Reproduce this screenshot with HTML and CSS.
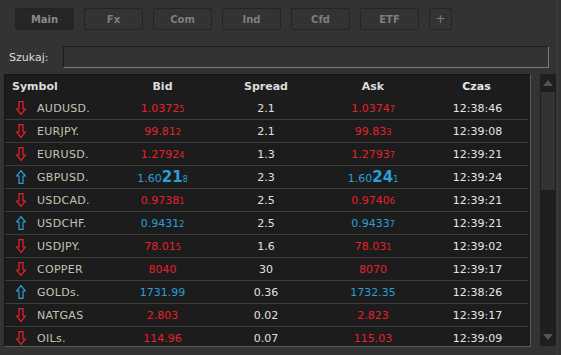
FILE: index.html
```html
<!DOCTYPE html>
<html>
<head>
<meta charset="utf-8">
<link rel="stylesheet" href="styles.css">
</head>
<body>
<div class="app">
  <div class="tabs">
    <div class="tab active">Main</div>
    <div class="tab">Fx</div>
    <div class="tab">Com</div>
    <div class="tab">Ind</div>
    <div class="tab">Cfd</div>
    <div class="tab">ETF</div>
    <div class="tab plus">+</div>
  </div>
  <div class="search">
    <label class="search-label">Szukaj:</label>
    <div class="search-input"></div>
  </div>
  <div class="main">
    <div class="panel">
      <div class="row head">
        <div class="c sym">Symbol</div>
        <div class="c">Bid</div>
        <div class="c">Spread</div>
        <div class="c">Ask</div>
        <div class="c time">Czas</div>
      </div>

      <div class="row">
        <div class="c sym"><svg class="arr down" viewBox="0 0 10 14"><polygon points="3,0.6 7,0.6 7,8 9.4,8 5,13.4 0.6,8 3,8"/></svg><span class="name">AUDUSD.</span></div>
        <div class="c red">1.0372<small>5</small></div>
        <div class="c sp">2.1</div>
        <div class="c red">1.0374<small>7</small></div>
        <div class="c time">12:38:46</div>
      </div>
      <div class="row">
        <div class="c sym"><svg class="arr down" viewBox="0 0 10 14"><polygon points="3,0.6 7,0.6 7,8 9.4,8 5,13.4 0.6,8 3,8"/></svg><span class="name">EURJPY.</span></div>
        <div class="c red">99.81<small>2</small></div>
        <div class="c sp">2.1</div>
        <div class="c red">99.83<small>3</small></div>
        <div class="c time">12:39:08</div>
      </div>
      <div class="row">
        <div class="c sym"><svg class="arr down" viewBox="0 0 10 14"><polygon points="3,0.6 7,0.6 7,8 9.4,8 5,13.4 0.6,8 3,8"/></svg><span class="name">EURUSD.</span></div>
        <div class="c red">1.2792<small>4</small></div>
        <div class="c sp">1.3</div>
        <div class="c red">1.2793<small>7</small></div>
        <div class="c time">12:39:21</div>
      </div>
      <div class="row">
        <div class="c sym"><svg class="arr up" viewBox="0 0 10 14"><polygon points="3,13.4 7,13.4 7,6 9.4,6 5,0.6 0.6,6 3,6"/></svg><span class="name">GBPUSD.</span></div>
        <div class="c blue">1.60<b>21</b><small>8</small></div>
        <div class="c sp">2.3</div>
        <div class="c blue">1.60<b>24</b><small>1</small></div>
        <div class="c time">12:39:24</div>
      </div>
      <div class="row">
        <div class="c sym"><svg class="arr down" viewBox="0 0 10 14"><polygon points="3,0.6 7,0.6 7,8 9.4,8 5,13.4 0.6,8 3,8"/></svg><span class="name">USDCAD.</span></div>
        <div class="c red">0.9738<small>1</small></div>
        <div class="c sp">2.5</div>
        <div class="c red">0.9740<small>6</small></div>
        <div class="c time">12:39:21</div>
      </div>
      <div class="row">
        <div class="c sym"><svg class="arr up" viewBox="0 0 10 14"><polygon points="3,13.4 7,13.4 7,6 9.4,6 5,0.6 0.6,6 3,6"/></svg><span class="name">USDCHF.</span></div>
        <div class="c blue">0.9431<small>2</small></div>
        <div class="c sp">2.5</div>
        <div class="c blue">0.9433<small>7</small></div>
        <div class="c time">12:39:21</div>
      </div>
      <div class="row">
        <div class="c sym"><svg class="arr down" viewBox="0 0 10 14"><polygon points="3,0.6 7,0.6 7,8 9.4,8 5,13.4 0.6,8 3,8"/></svg><span class="name">USDJPY.</span></div>
        <div class="c red">78.01<small>5</small></div>
        <div class="c sp">1.6</div>
        <div class="c red">78.03<small>1</small></div>
        <div class="c time">12:39:02</div>
      </div>
      <div class="row">
        <div class="c sym"><svg class="arr down" viewBox="0 0 10 14"><polygon points="3,0.6 7,0.6 7,8 9.4,8 5,13.4 0.6,8 3,8"/></svg><span class="name">COPPER</span></div>
        <div class="c red">8040</div>
        <div class="c sp">30</div>
        <div class="c red">8070</div>
        <div class="c time">12:39:17</div>
      </div>
      <div class="row">
        <div class="c sym"><svg class="arr up" viewBox="0 0 10 14"><polygon points="3,13.4 7,13.4 7,6 9.4,6 5,0.6 0.6,6 3,6"/></svg><span class="name">GOLDs.</span></div>
        <div class="c blue">1731.99</div>
        <div class="c sp">0.36</div>
        <div class="c blue">1732.35</div>
        <div class="c time">12:38:26</div>
      </div>
      <div class="row">
        <div class="c sym"><svg class="arr down" viewBox="0 0 10 14"><polygon points="3,0.6 7,0.6 7,8 9.4,8 5,13.4 0.6,8 3,8"/></svg><span class="name">NATGAS</span></div>
        <div class="c red">2.803</div>
        <div class="c sp">0.02</div>
        <div class="c red">2.823</div>
        <div class="c time">12:39:17</div>
      </div>
      <div class="row">
        <div class="c sym"><svg class="arr down" viewBox="0 0 10 14"><polygon points="3,0.6 7,0.6 7,8 9.4,8 5,13.4 0.6,8 3,8"/></svg><span class="name">OILs.</span></div>
        <div class="c red">114.96</div>
        <div class="c sp">0.07</div>
        <div class="c red">115.03</div>
        <div class="c time">12:39:09</div>
      </div>
    </div>
    <div class="scrollbar">
      <div class="sb-arrow"><svg viewBox="0 0 10 6" width="10" height="6"><polygon points="5,0 10,6 0,6"/></svg></div>
      <div class="sb-thumb"></div>
      <div class="sb-space"></div>
      <div class="sb-arrow"><svg viewBox="0 0 10 6" width="10" height="6"><polygon points="0,0 10,0 5,6"/></svg></div>
    </div>
  </div>
</div>
</body>
</html>
```

FILE: styles.css
```css
html, body {
  margin: 0;
  padding: 0;
  background: #333333;
  width: 561px;
  height: 355px;
  overflow: hidden;
  font-family: "DejaVu Sans", Verdana, sans-serif;
}
.app {
  width: 558px;
  height: 355px;
  border-right: 1px solid #3e3e3e;
  box-sizing: border-box;
}
.tabs {
  display: flex;
  gap: 10px;
  padding: 8px 0 0 15px;
}
.tab {
  width: 59px;
  height: 22px;
  box-sizing: border-box;
  border: 1px solid #242424;
  border-radius: 2px;
  background: #333333;
  color: #7e7e7e;
  font-weight: bold;
  font-size: 10px;
  display: flex;
  align-items: center;
  justify-content: center;
}
.tab.active {
  background: #262626;
  color: #8a8a8a;
}
.tab.plus {
  width: 23px;
  font-size: 12px;
  font-weight: normal;
}
.search {
  display: flex;
  align-items: center;
  margin-top: 16px;
  padding-left: 9px;
}
.search-label {
  color: #dddddd;
  font-size: 11px;
  width: 54px;
}
.search-input {
  width: 486px;
  height: 22px;
  box-sizing: border-box;
  background: #333333;
  border-top: 1px solid #1c1c1c;
  border-left: 1px solid #1c1c1c;
  border-right: 1px solid #7a7a7a;
  border-bottom: 1px solid #7a7a7a;
}
.main {
  display: flex;
  gap: 9px;
  margin-top: 6px;
  padding-left: 4px;
}
.panel {
  width: 527px;
  height: 273px;
  box-sizing: border-box;
  background: #1c1c1c;
  border-top: 1px solid #151515;
  border-left: 1px solid #151515;
  border-right: 1px solid #5a5a5a;
  border-bottom: 1px solid #5a5a5a;
  overflow: hidden;
}
.row {
  display: grid;
  grid-template-columns: 110px 95px 112px 102px 105px;
  height: 22px;
  border-bottom: 1px solid #3c3c3c;
  align-items: center;
  font-size: 11px;
  margin-right: 2px;
}
.row.head {
  border-bottom: none;
  font-weight: bold;
  color: #dcdcdc;
}
.c {
  text-align: center;
  white-space: nowrap;
}
.c.sym {
  text-align: left;
  display: flex;
  align-items: center;
  padding-left: 7px;
}
.row:not(.head) .c.sym {
  padding-left: 11px;
}
.arr {
  width: 10px;
  height: 14px;
  fill: none;
  stroke-width: 1.2;
}
.arr.down { stroke: #e8202a; }
.arr.up { stroke: #2a9fd8; }
.name {
  margin-left: 11px;
  color: #c4c4b4;
  letter-spacing: 0.3px;
}
.red { color: #e8202a; }
.blue { color: #2a9fd8; }
.sp { color: #e0e0e0; }
.time { color: #e6e6e6; padding-left: 2px; }
.row.head .time { padding-left: 0; }
small {
  font-size: 8px;
}
b {
  font-size: 15px;
  font-weight: bold;
}
.scrollbar {
  width: 16px;
  height: 272px;
  background: #1f1f1f;
  display: flex;
  flex-direction: column;
  align-items: center;
}
.sb-arrow {
  height: 18px;
  display: flex;
  align-items: center;
  justify-content: center;
  fill: #555555;
}
.sb-thumb {
  width: 14px;
  height: 98px;
  background: #333333;
}
.sb-space {
  flex: 1;
}
```
